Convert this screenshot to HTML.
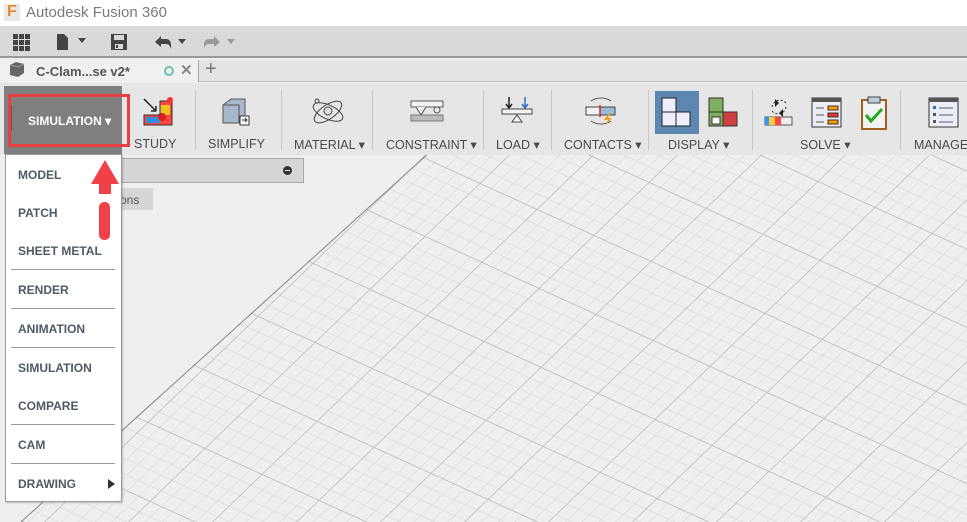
<!DOCTYPE html>
<html><head><meta charset="utf-8"><style>
*{margin:0;padding:0;box-sizing:border-box}
body{width:967px;height:522px;overflow:hidden;position:relative;background:#efefef;font-family:"Liberation Sans",sans-serif}
.a{position:absolute}
.lbl{position:absolute;top:137px;font-size:12.5px;color:#4a4a4a;white-space:nowrap}
.sep{position:absolute;top:90px;width:1px;height:60px;background:#c8c8c8}
.mi{position:absolute;left:18px;font-size:12px;font-weight:bold;color:#505a66}
.hr{position:absolute;left:11px;width:104px;height:1px;background:#999}
</style></head><body>
<svg class="a" style="left:0;top:0" width="967" height="522">
<defs>
<pattern id="mn" width="10" height="10" patternUnits="userSpaceOnUse" patternTransform="matrix(-1.1,1.06,1.14,0.52,423,157)"><path d="M0 0H10M0 0V10" stroke="#d8d8d8" stroke-width="0.9" fill="none"/></pattern>
<pattern id="mj" width="50" height="50" patternUnits="userSpaceOnUse" patternTransform="matrix(-1.1,1.06,1.14,0.52,423,157)"><path d="M0 0H50M0 0V50" stroke="#b4b4b4" stroke-width="0.9" fill="none"/></pattern>
<clipPath id="cp"><polygon points="430,150 967,150 967,522 0,522 0,540"/></clipPath>
</defs>
<g clip-path="url(#cp)"><rect width="967" height="522" fill="url(#mn)"/><rect width="967" height="522" fill="url(#mj)"/></g>
<line x1="430" y1="152" x2="0" y2="541" stroke="#888" stroke-width="1"/>
</svg>
<div class="a" style="left:0;top:0;width:967px;height:26px;background:#fff"></div>
<div class="a" style="left:4px;top:4px;width:16px;height:17px;background:#e8e8e8"></div>
<div class="a" style="left:7px;top:3px;font-size:16px;font-weight:bold;color:#e8892a">F</div>
<div class="a" style="left:26px;top:4px;font-size:15px;color:#7a7a7a">Autodesk Fusion 360</div>
<div class="a" style="left:0;top:26px;width:967px;height:32px;background:#d9d9d9;border-bottom:2px solid #999"></div>
<svg class="a" style="left:0;top:26px" width="260" height="32">
<g fill="#444"><rect x="13" y="8" width="5" height="5"/><rect x="19" y="8" width="5" height="5"/><rect x="25" y="8" width="5" height="5"/><rect x="13" y="14" width="5" height="5"/><rect x="19" y="14" width="5" height="5"/><rect x="25" y="14" width="5" height="5"/><rect x="13" y="20" width="5" height="5"/><rect x="19" y="20" width="5" height="5"/><rect x="25" y="20" width="5" height="5"/>
<path d="M57 8h7l4 4v12h-11z"/><path d="M78 12h8l-4 5z"/>
<path d="M111 8h16v16h-16z"/></g>
<rect x="114" y="9" width="10" height="5" fill="#d9d9d9"/><rect x="115" y="18" width="8" height="5" fill="#d9d9d9"/><rect x="116" y="19" width="2" height="3" fill="#444"/>
<path d="M155 16l6-6v3h5c3 0 5 2 5 6v4c-1-3-2-5-5-5h-5v3z" fill="#444"/><path d="M178 13h8l-4 5z" fill="#444"/>
<path d="M220 16l-6-6v3h-5c-3 0-5 2-5 6v4c1-3 2-5 5-5h5v3z" fill="#999"/><path d="M227 13h8l-4 5z" fill="#999"/>
</svg>
<div class="a" style="left:0;top:60px;width:967px;height:22px;background:#e4e4e4;border-bottom:1px solid #c0c0c0"></div>
<div class="a" style="left:0;top:60px;width:199px;height:22px;background:#f0f0f0;border-right:1px solid #aaa"></div>
<svg class="a" style="left:8px;top:61px" width="20" height="18"><path d="M2 4l6-3 8 2v9l-6 4-8-2z" fill="#666"/><path d="M2 4l8 2 6-3" stroke="#999" fill="none"/></svg>
<div class="a" style="left:36px;top:64px;font-size:13px;font-weight:bold;color:#555">C-Clam...se v2*</div>
<div class="a" style="left:164px;top:66px;width:10px;height:10px;border:2px solid #6cc0b0;border-radius:50%"></div>
<div class="a" style="left:180px;top:61px;font-size:15px;font-weight:bold;color:#888">✕</div>
<div class="a" style="left:205px;top:58px;font-size:20px;color:#777">+</div>
<div class="a" style="left:0;top:83px;width:967px;height:72px;background:#e6e6e6"></div>
<div class="a" style="left:4px;top:86px;width:118px;height:68px;background:#7f7f7f"></div>
<div class="a" style="left:10px;top:105px;width:2px;height:26px;background:#5a5a5a"></div>
<div class="a" style="left:28px;top:114px;font-size:12px;font-weight:bold;color:#fff">SIMULATION ▾</div>
<div class="a" style="left:8px;top:94px;width:122px;height:53px;border:3px solid #e84040"></div>
<svg class="a" style="left:140px;top:95px" width="40" height="34"><path d="M4 20h16v-14h12v24h-28z" fill="#f44"/><path d="M6 22h14v6h-14z" fill="#2c8fe0"/><path d="M20 10h10v10h-10z" fill="#f0c020"/><circle cx="22" cy="22" r="4" fill="#e02020"/><path d="M4 20h16v-14h12v24h-28z" fill="none" stroke="#333"/><path d="M4 4l12 12M16 16v-5M16 16h-5" stroke="#222" stroke-width="1.5" fill="none"/><circle cx="30" cy="5" r="3" fill="#f33"/></svg>
<div class="lbl" style="left:134px">STUDY</div>
<div class="sep" style="left:195px"></div>
<svg class="a" style="left:220px;top:97px" width="36" height="32"><path d="M3 8l8-6h14v18l-6 6h-16z" fill="#a8b8cc" stroke="#555"/><path d="M3 8h16v18" fill="none" stroke="#555"/><rect x="20" y="19" width="9" height="9" fill="#fff" stroke="#333"/><path d="M22 23h5M25 21l2 2-2 2" stroke="#333" fill="none"/></svg>
<div class="lbl" style="left:208px">SIMPLIFY</div>
<div class="sep" style="left:281px"></div>
<svg class="a" style="left:308px;top:95px" width="40" height="34"><ellipse cx="20" cy="17" rx="16" ry="7" fill="none" stroke="#444" transform="rotate(25 20 17)"/><ellipse cx="20" cy="17" rx="16" ry="7" fill="none" stroke="#444" transform="rotate(-35 20 17)"/><circle cx="20" cy="16" r="4" fill="#ddd" stroke="#444"/><circle cx="9" cy="6" r="2" fill="#ddd" stroke="#444"/></svg>
<div class="lbl" style="left:294px">MATERIAL ▾</div>
<div class="sep" style="left:372px"></div>
<svg class="a" style="left:410px;top:98px" width="36" height="26"><rect x="1" y="3" width="32" height="6" fill="#f4f4f4" stroke="#555"/><path d="M6 9l5 8 5-8" fill="#eee" stroke="#555"/><circle cx="27" cy="12" r="3" fill="#eee" stroke="#555"/><rect x="1" y="17" width="32" height="6" fill="#bbb" stroke="#777"/></svg>
<div class="lbl" style="left:386px">CONSTRAINT ▾</div>
<div class="sep" style="left:483px"></div>
<svg class="a" style="left:500px;top:95px" width="34" height="34"><path d="M9 2v10M6 9l3 4 3-4" stroke="#222" stroke-width="1.5" fill="none"/><path d="M25 2v10M22 9l3 4 3-4" stroke="#2a70d0" stroke-width="1.5" fill="none"/><rect x="2" y="14" width="30" height="5" fill="#f4f4f4" stroke="#444"/><path d="M12 27l5-7 5 7z" fill="#fff" stroke="#444"/></svg>
<div class="lbl" style="left:496px">LOAD ▾</div>
<div class="sep" style="left:551px"></div>
<svg class="a" style="left:583px;top:95px" width="38" height="34"><rect x="3" y="12" width="14" height="8" fill="#f2f2f2" stroke="#444"/><rect x="17" y="12" width="15" height="8" fill="#9ab8d8" stroke="#444"/><path d="M17 10v12" stroke="#d22" stroke-width="1.5"/><path d="M8 6a14 10 0 0 1 20 0M8 26a14 10 0 0 0 20 0" stroke="#555" fill="none"/><path d="M26 18l-5 7h4l-3 6 7-8h-4l3-5z" fill="#f0a020"/></svg>
<div class="lbl" style="left:564px">CONTACTS ▾</div>
<div class="sep" style="left:648px"></div>
<div class="a" style="left:655px;top:91px;width:44px;height:43px;background:#5b87b0"></div>
<svg class="a" style="left:660px;top:96px" width="34" height="34"><rect x="2" y="2" width="14" height="14" fill="#eef" stroke="#222"/><rect x="2" y="16" width="14" height="14" fill="#eef" stroke="#222"/><rect x="16" y="16" width="14" height="14" fill="#eef" stroke="#222"/></svg>
<svg class="a" style="left:707px;top:97px" width="34" height="32"><rect x="2" y="1" width="14" height="14" fill="#7fb060" stroke="#333"/><rect x="2" y="15" width="14" height="14" fill="#7fb060" stroke="#333"/><rect x="16" y="15" width="14" height="14" fill="#d04040" stroke="#333"/><rect x="5" y="20" width="8" height="7" fill="#fff" stroke="#333"/></svg>
<div class="lbl" style="left:668px">DISPLAY ▾</div>
<div class="sep" style="left:752px"></div>
<svg class="a" style="left:764px;top:95px" width="30" height="34"><path d="M8 12a8 8 0 0 1 14-4M22 12a8 8 0 0 1-14 4" stroke="#333" stroke-dasharray="2 2" fill="none"/><path d="M11 4l4 4-4 4z M19 14l-4 4 4 4z" fill="#222"/><rect x="1" y="22" width="27" height="8" fill="#eee" stroke="#555"/><rect x="1" y="22" width="16" height="8" fill="#f44"/><rect x="5" y="22" width="6" height="8" fill="#fc3"/><rect x="1" y="22" width="4" height="8" fill="#39f"/></svg>
<svg class="a" style="left:810px;top:96px" width="34" height="34"><rect x="2" y="2" width="29" height="29" fill="#eaeef4" stroke="#333"/><rect x="2" y="2" width="29" height="4" fill="#555"/><path d="M6 12h8M6 19h8M6 26h8" stroke="#555"/><rect x="18" y="10" width="10" height="4" fill="#f90" stroke="#333"/><rect x="18" y="17" width="10" height="4" fill="#e33" stroke="#333"/><rect x="18" y="24" width="10" height="4" fill="#f90" stroke="#333"/></svg>
<svg class="a" style="left:860px;top:95px" width="28" height="36"><rect x="2" y="5" width="24" height="29" fill="#f2f2f2" stroke="#a06020" stroke-width="2"/><rect x="8" y="2" width="12" height="6" fill="#bcd" stroke="#444"/><path d="M6 20l5 6 11-12" stroke="#2a2" stroke-width="3" fill="none"/></svg>
<div class="lbl" style="left:800px">SOLVE ▾</div>
<div class="sep" style="left:900px"></div>
<svg class="a" style="left:927px;top:96px" width="34" height="34"><rect x="2" y="2" width="29" height="29" fill="#eaeef4" stroke="#333"/><rect x="2" y="2" width="29" height="4" fill="#555"/><path d="M12 12h14M12 19h14M12 26h14" stroke="#557"/><rect x="6" y="10" width="3" height="3" fill="#36c"/><rect x="6" y="17" width="3" height="3" fill="#555"/><rect x="6" y="24" width="3" height="3" fill="#555"/></svg>
<div class="lbl" style="left:914px">MANAGE ▾</div>
<div class="a" style="left:118px;top:158px;width:186px;height:25px;background:#d6d6d6;border:1px solid #a8a8a8"></div>
<div class="a" style="left:283px;top:166px;width:9px;height:9px;border-radius:50%;background:#333"></div>
<div class="a" style="left:285px;top:170px;width:5px;height:1px;background:#fff"></div>
<div class="a" style="left:118px;top:188px;width:35px;height:22px;background:#d6d6d6"></div>
<div class="a" style="left:120px;top:193px;font-size:12px;color:#555">ons</div>
<div class="a" style="left:5px;top:154px;width:117px;height:348px;background:#fff;border:1px solid #999;box-shadow:1px 1px 2px rgba(0,0,0,.2)"></div>
<div class="mi" style="top:168px">MODEL</div>
<div class="mi" style="top:206px">PATCH</div>
<div class="mi" style="top:244px">SHEET METAL</div>
<div class="hr" style="top:269px"></div>
<div class="mi" style="top:283px">RENDER</div>
<div class="hr" style="top:308px"></div>
<div class="mi" style="top:322px">ANIMATION</div>
<div class="hr" style="top:347px"></div>
<div class="mi" style="top:361px">SIMULATION</div>
<div class="mi" style="top:399px">COMPARE</div>
<div class="hr" style="top:424px"></div>
<div class="mi" style="top:438px">CAM</div>
<div class="hr" style="top:463px"></div>
<div class="mi" style="top:477px">DRAWING</div>
<svg class="a" style="left:107px;top:478px" width="10" height="12"><path d="M1 1l7 5-7 5z" fill="#333"/></svg>
<svg class="a" style="left:85px;top:158px" width="40" height="86"><path d="M20 2l-14 24h8v10h12v-10h8z" fill="#f04048"/><rect x="14" y="44" width="11" height="38" rx="5" fill="#f04048"/></svg>
</body></html>
